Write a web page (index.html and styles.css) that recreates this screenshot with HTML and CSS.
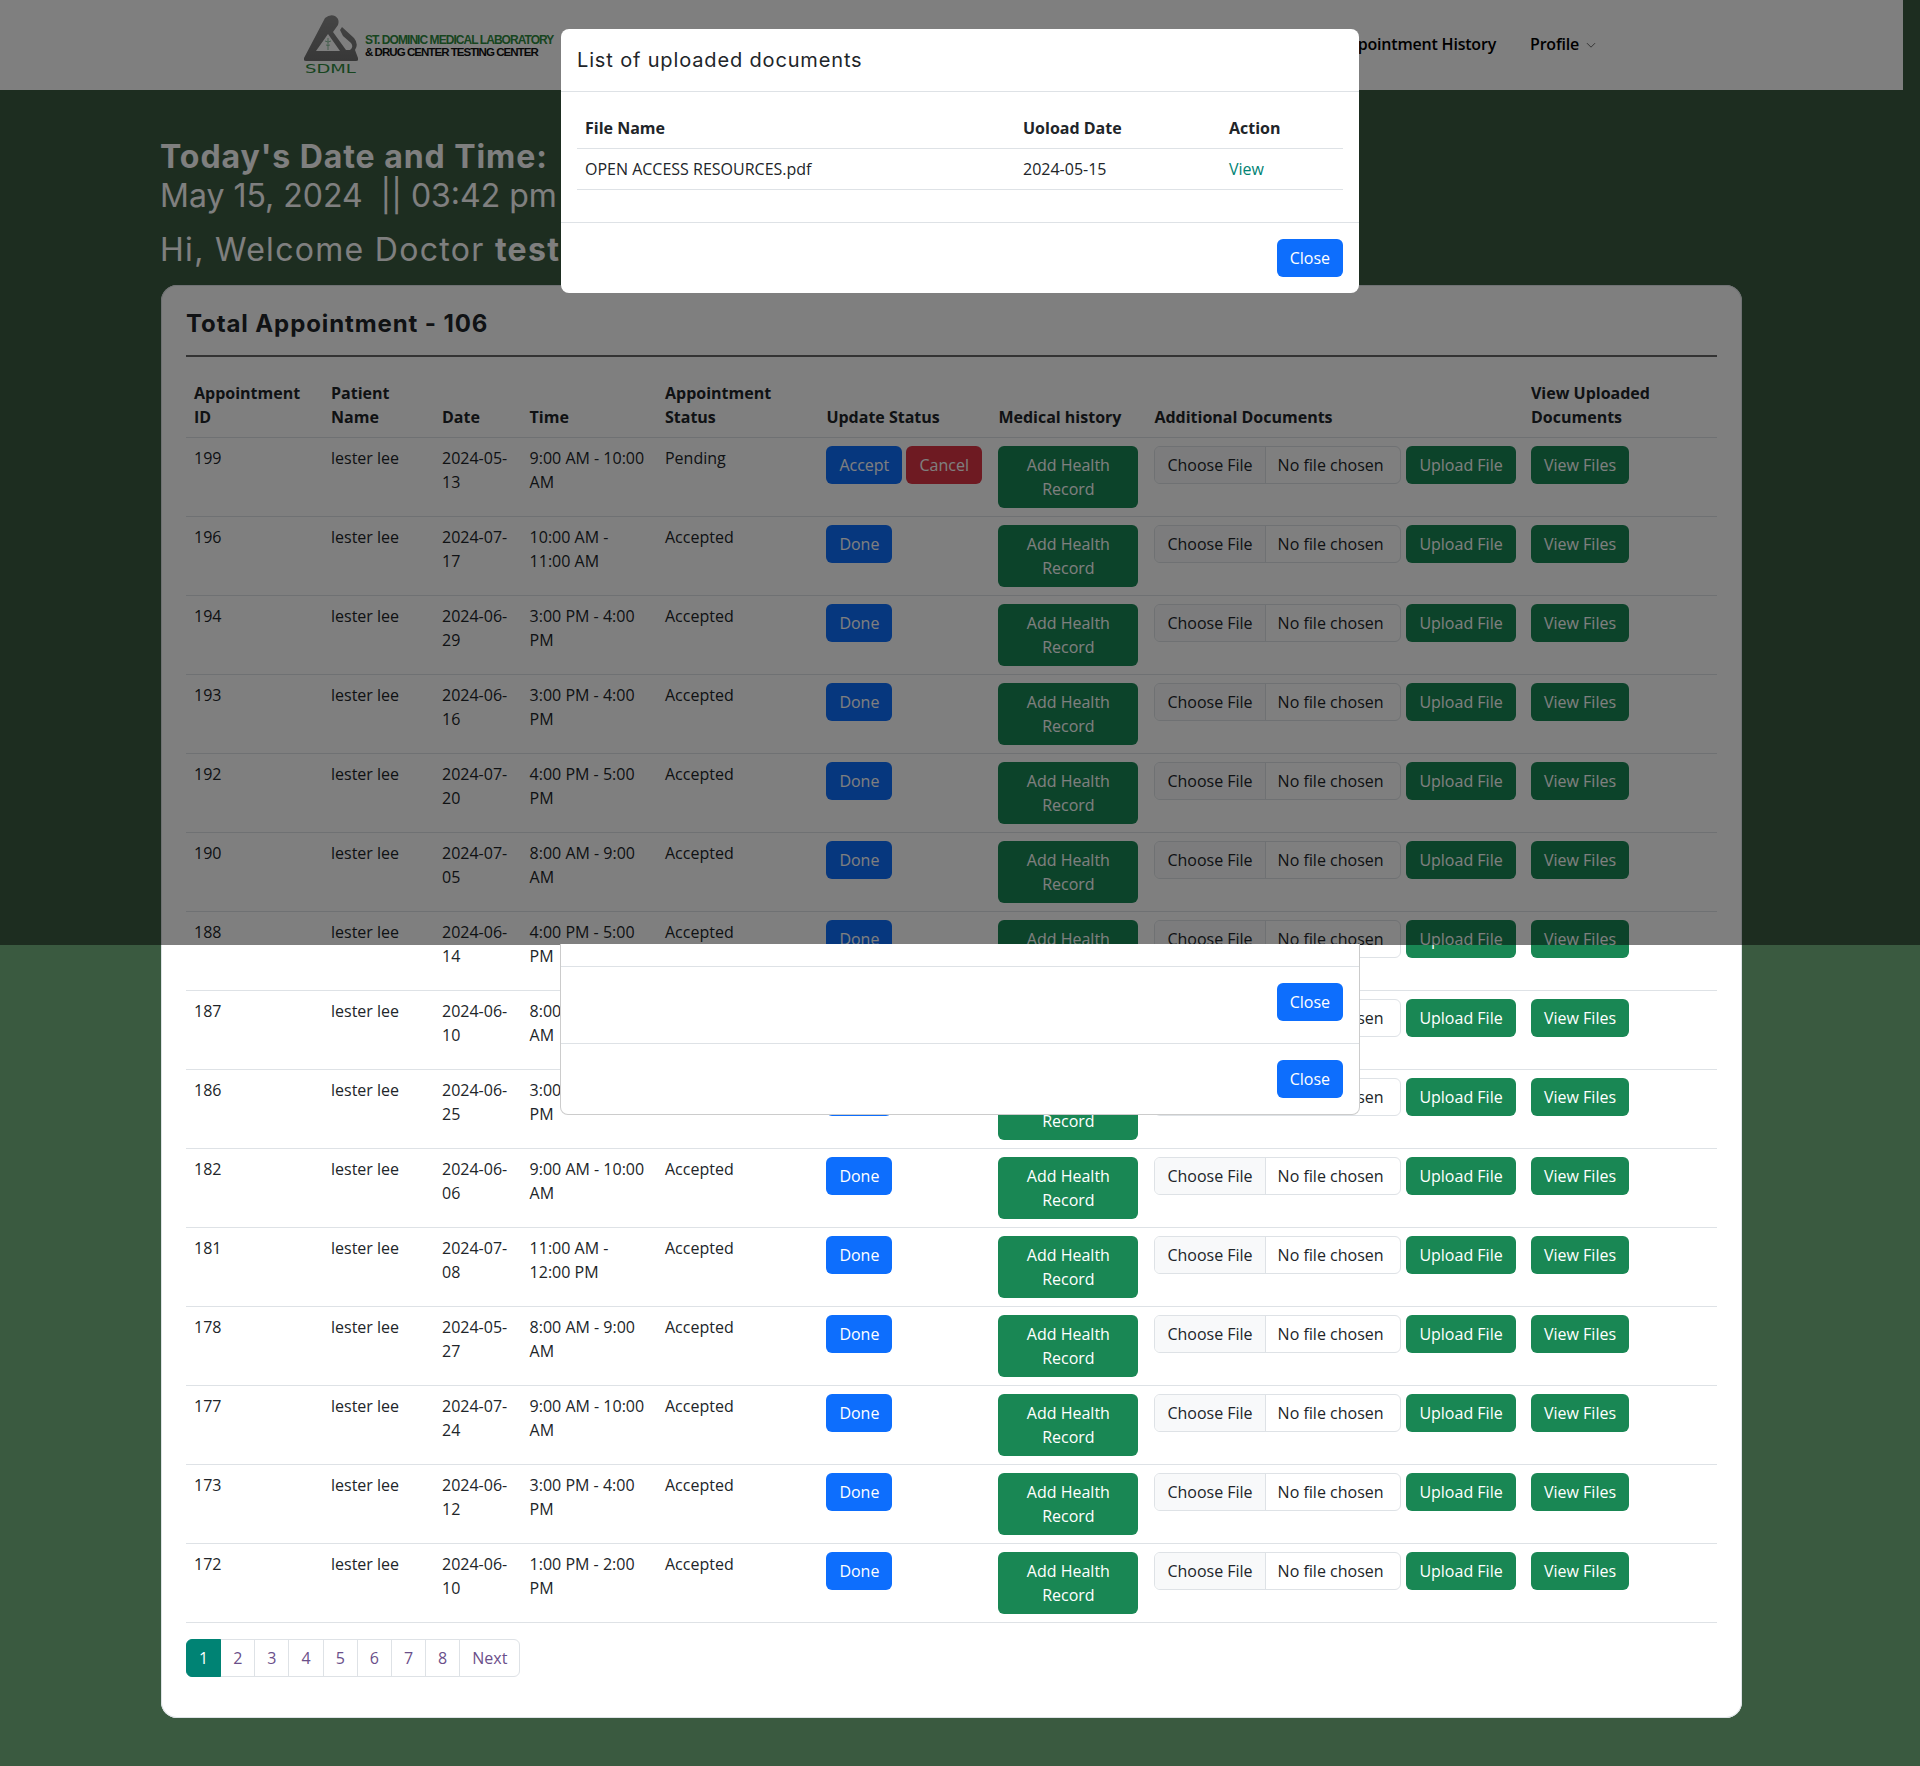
FILE: index.html
```html
<!DOCTYPE html>
<html lang="en">
<head>
    <meta charset="UTF-8">
    <title>Doctor Dashboard</title>
    <link rel="stylesheet" href="styles.css">
</head>
<body>
    <header class="navbar">
        <a class="brand" href="#">
            <span class="brand-mark">
                <svg class="brand-icon" width="54" height="47" viewBox="0 0 54 47">
                    <defs>
                        <linearGradient id="logoGray" x1="0" y1="0" x2="0" y2="1">
                            <stop offset="0" stop-color="#8a8a8a"/>
                            <stop offset="1" stop-color="#707070"/>
                        </linearGradient>
                    </defs>
                    <path fill="url(#logoGray)" fill-rule="evenodd" d="M21 3 Q26 -1 31 1 Q36 4 34 10 L29 17 L42 35 L46 35 Q50 32 47 28 L39 21 L36 15 L38 12 L50 23 Q55 29 51 35 L54 43 Q55 46 52 46 L2 46 Q-1 46 0 43 Z M24 19 L12 36 L36 36 Z"/>
                    <path d="M24 23 V35 M21 26 Q24 28 27 26 M22 30 Q24 31 26 30" stroke="#8fbf9f" stroke-width="1" fill="none"/>
                </svg>
                <span class="brand-abbr">SDML</span>
            </span>
            <span class="brand-text">
                <span class="brand-line-green">ST. DOMINIC MEDICAL LABORATORY</span>
                <span class="brand-line-black">&amp; DRUG CENTER TESTING CENTER</span>
            </span>
        </a>
        <nav class="nav-links">
            <a href="#">Appointment History</a>
            <a href="#">Profile
                <svg class="chevron" width="10" height="10" viewBox="0 0 16 16"><path d="M1.5 5l6.5 6.5L14.5 5" fill="none" stroke="#555" stroke-width="1.4"/></svg>
            </a>
        </nav>
    </header>

    <main class="page">
        <h2 class="today-title">Today's Date and Time:</h2>
        <p class="today-value">May 15, 2024 &nbsp;|| 03:42 pm</p>
        <p class="welcome">Hi, Welcome Doctor <b>test doctor</b></p>

        <section class="card">
            <h3 class="card-title">Total Appointment - 106</h3>
            <hr class="card-rule">

            <table class="appt-table">
                <colgroup>
                    <col class="col-id"><col class="col-name"><col class="col-date"><col class="col-time"><col class="col-status">
                    <col class="col-update"><col class="col-history"><col class="col-docs"><col class="col-view">
                </colgroup>
                <thead>
                    <tr>
                        <th>Appointment ID</th>
                        <th>Patient Name</th>
                        <th>Date</th>
                        <th>Time</th>
                        <th>Appointment Status</th>
                        <th>Update Status</th>
                        <th>Medical history</th>
                        <th>Additional Documents</th>
                        <th>View Uploaded Documents</th>
                    </tr>
                </thead>
                <tbody>
                    <tr>
                        <td>199</td><td>lester lee</td><td>2024-05-13</td><td>9:00 AM - 10:00 AM</td><td>Pending</td>
                        <td><a class="btn btn-primary" href="#">Accept</a> <a class="btn btn-danger" href="#">Cancel</a></td>
                        <td><a class="btn btn-success btn-block" href="#">Add Health Record</a></td>
                        <td><div class="upload"><div class="file-input"><span class="file-btn">Choose File</span><span class="file-name">No file chosen</span></div><a class="btn btn-success" href="#">Upload File</a></div></td>
                        <td><a class="btn btn-success" href="#">View Files</a></td>
                    </tr>
                    <tr>
                        <td>196</td><td>lester lee</td><td>2024-07-17</td><td>10:00 AM - 11:00 AM</td><td>Accepted</td>
                        <td><a class="btn btn-primary" href="#">Done</a></td>
                        <td><a class="btn btn-success btn-block" href="#">Add Health Record</a></td>
                        <td><div class="upload"><div class="file-input"><span class="file-btn">Choose File</span><span class="file-name">No file chosen</span></div><a class="btn btn-success" href="#">Upload File</a></div></td>
                        <td><a class="btn btn-success" href="#">View Files</a></td>
                    </tr>
                    <tr>
                        <td>194</td><td>lester lee</td><td>2024-06-29</td><td>3:00 PM - 4:00 PM</td><td>Accepted</td>
                        <td><a class="btn btn-primary" href="#">Done</a></td>
                        <td><a class="btn btn-success btn-block" href="#">Add Health Record</a></td>
                        <td><div class="upload"><div class="file-input"><span class="file-btn">Choose File</span><span class="file-name">No file chosen</span></div><a class="btn btn-success" href="#">Upload File</a></div></td>
                        <td><a class="btn btn-success" href="#">View Files</a></td>
                    </tr>
                    <tr>
                        <td>193</td><td>lester lee</td><td>2024-06-16</td><td>3:00 PM - 4:00 PM</td><td>Accepted</td>
                        <td><a class="btn btn-primary" href="#">Done</a></td>
                        <td><a class="btn btn-success btn-block" href="#">Add Health Record</a></td>
                        <td><div class="upload"><div class="file-input"><span class="file-btn">Choose File</span><span class="file-name">No file chosen</span></div><a class="btn btn-success" href="#">Upload File</a></div></td>
                        <td><a class="btn btn-success" href="#">View Files</a></td>
                    </tr>
                    <tr>
                        <td>192</td><td>lester lee</td><td>2024-07-20</td><td>4:00 PM - 5:00 PM</td><td>Accepted</td>
                        <td><a class="btn btn-primary" href="#">Done</a></td>
                        <td><a class="btn btn-success btn-block" href="#">Add Health Record</a></td>
                        <td><div class="upload"><div class="file-input"><span class="file-btn">Choose File</span><span class="file-name">No file chosen</span></div><a class="btn btn-success" href="#">Upload File</a></div></td>
                        <td><a class="btn btn-success" href="#">View Files</a></td>
                    </tr>
                    <tr>
                        <td>190</td><td>lester lee</td><td>2024-07-05</td><td>8:00 AM - 9:00 AM</td><td>Accepted</td>
                        <td><a class="btn btn-primary" href="#">Done</a></td>
                        <td><a class="btn btn-success btn-block" href="#">Add Health Record</a></td>
                        <td><div class="upload"><div class="file-input"><span class="file-btn">Choose File</span><span class="file-name">No file chosen</span></div><a class="btn btn-success" href="#">Upload File</a></div></td>
                        <td><a class="btn btn-success" href="#">View Files</a></td>
                    </tr>
                    <tr>
                        <td>188</td><td>lester lee</td><td>2024-06-14</td><td>4:00 PM - 5:00 PM</td><td>Accepted</td>
                        <td><a class="btn btn-primary" href="#">Done</a></td>
                        <td><a class="btn btn-success btn-block" href="#">Add Health Record</a></td>
                        <td><div class="upload"><div class="file-input"><span class="file-btn">Choose File</span><span class="file-name">No file chosen</span></div><a class="btn btn-success" href="#">Upload File</a></div></td>
                        <td><a class="btn btn-success" href="#">View Files</a></td>
                    </tr>
                    <tr>
                        <td>187</td><td>lester lee</td><td>2024-06-10</td><td>8:00 AM - 9:00 AM</td><td>Accepted</td>
                        <td><a class="btn btn-primary" href="#">Done</a></td>
                        <td><a class="btn btn-success btn-block" href="#">Add Health Record</a></td>
                        <td><div class="upload"><div class="file-input"><span class="file-btn">Choose File</span><span class="file-name">No file chosen</span></div><a class="btn btn-success" href="#">Upload File</a></div></td>
                        <td><a class="btn btn-success" href="#">View Files</a></td>
                    </tr>
                    <tr>
                        <td>186</td><td>lester lee</td><td>2024-06-25</td><td>3:00 PM - 4:00 PM</td><td>Accepted</td>
                        <td><a class="btn btn-primary" href="#">Done</a></td>
                        <td><a class="btn btn-success btn-block" href="#">Add Health Record</a></td>
                        <td><div class="upload"><div class="file-input"><span class="file-btn">Choose File</span><span class="file-name">No file chosen</span></div><a class="btn btn-success" href="#">Upload File</a></div></td>
                        <td><a class="btn btn-success" href="#">View Files</a></td>
                    </tr>
                    <tr>
                        <td>182</td><td>lester lee</td><td>2024-06-06</td><td>9:00 AM - 10:00 AM</td><td>Accepted</td>
                        <td><a class="btn btn-primary" href="#">Done</a></td>
                        <td><a class="btn btn-success btn-block" href="#">Add Health Record</a></td>
                        <td><div class="upload"><div class="file-input"><span class="file-btn">Choose File</span><span class="file-name">No file chosen</span></div><a class="btn btn-success" href="#">Upload File</a></div></td>
                        <td><a class="btn btn-success" href="#">View Files</a></td>
                    </tr>
                    <tr>
                        <td>181</td><td>lester lee</td><td>2024-07-08</td><td>11:00 AM - 12:00 PM</td><td>Accepted</td>
                        <td><a class="btn btn-primary" href="#">Done</a></td>
                        <td><a class="btn btn-success btn-block" href="#">Add Health Record</a></td>
                        <td><div class="upload"><div class="file-input"><span class="file-btn">Choose File</span><span class="file-name">No file chosen</span></div><a class="btn btn-success" href="#">Upload File</a></div></td>
                        <td><a class="btn btn-success" href="#">View Files</a></td>
                    </tr>
                    <tr>
                        <td>178</td><td>lester lee</td><td>2024-05-27</td><td>8:00 AM - 9:00 AM</td><td>Accepted</td>
                        <td><a class="btn btn-primary" href="#">Done</a></td>
                        <td><a class="btn btn-success btn-block" href="#">Add Health Record</a></td>
                        <td><div class="upload"><div class="file-input"><span class="file-btn">Choose File</span><span class="file-name">No file chosen</span></div><a class="btn btn-success" href="#">Upload File</a></div></td>
                        <td><a class="btn btn-success" href="#">View Files</a></td>
                    </tr>
                    <tr>
                        <td>177</td><td>lester lee</td><td>2024-07-24</td><td>9:00 AM - 10:00 AM</td><td>Accepted</td>
                        <td><a class="btn btn-primary" href="#">Done</a></td>
                        <td><a class="btn btn-success btn-block" href="#">Add Health Record</a></td>
                        <td><div class="upload"><div class="file-input"><span class="file-btn">Choose File</span><span class="file-name">No file chosen</span></div><a class="btn btn-success" href="#">Upload File</a></div></td>
                        <td><a class="btn btn-success" href="#">View Files</a></td>
                    </tr>
                    <tr>
                        <td>173</td><td>lester lee</td><td>2024-06-12</td><td>3:00 PM - 4:00 PM</td><td>Accepted</td>
                        <td><a class="btn btn-primary" href="#">Done</a></td>
                        <td><a class="btn btn-success btn-block" href="#">Add Health Record</a></td>
                        <td><div class="upload"><div class="file-input"><span class="file-btn">Choose File</span><span class="file-name">No file chosen</span></div><a class="btn btn-success" href="#">Upload File</a></div></td>
                        <td><a class="btn btn-success" href="#">View Files</a></td>
                    </tr>
                    <tr>
                        <td>172</td><td>lester lee</td><td>2024-06-10</td><td>1:00 PM - 2:00 PM</td><td>Accepted</td>
                        <td><a class="btn btn-primary" href="#">Done</a></td>
                        <td><a class="btn btn-success btn-block" href="#">Add Health Record</a></td>
                        <td><div class="upload"><div class="file-input"><span class="file-btn">Choose File</span><span class="file-name">No file chosen</span></div><a class="btn btn-success" href="#">Upload File</a></div></td>
                        <td><a class="btn btn-success" href="#">View Files</a></td>
                    </tr>
                </tbody>
            </table>

            <ul class="pagination">
                <li class="active"><a href="#">1</a></li>
                <li><a href="#">2</a></li>
                <li><a href="#">3</a></li>
                <li><a href="#">4</a></li>
                <li><a href="#">5</a></li>
                <li><a href="#">6</a></li>
                <li><a href="#">7</a></li>
                <li><a href="#">8</a></li>
                <li><a href="#">Next</a></li>
            </ul>
        </section>
    </main>

    <div class="backdrop"></div>

    <!-- open modal -->
    <div class="modal modal-docs">
        <div class="modal-header">
            <h5 class="modal-title">List of uploaded documents</h5>
        </div>
        <div class="modal-body">
            <table class="docs-table">
                <colgroup><col class="col-file"><col class="col-upload"><col class="col-action"></colgroup>
                <thead>
                    <tr><th>File Name</th><th>Uoload Date</th><th>Action</th></tr>
                </thead>
                <tbody>
                    <tr><td>OPEN ACCESS RESOURCES.pdf</td><td>2024-05-15</td><td><a class="view-link" href="#">View</a></td></tr>
                </tbody>
            </table>
        </div>
        <div class="modal-footer">
            <a class="btn btn-primary" href="#">Close</a>
        </div>
    </div>

    <!-- leftover modals under the fold -->
    <div class="modal modal-stack">
        <div class="stack-gap"></div>
        <div class="modal-footer stack-footer">
            <a class="btn btn-primary" href="#">Close</a>
        </div>
        <div class="modal-footer stack-footer">
            <a class="btn btn-primary" href="#">Close</a>
        </div>
    </div>
</body>
</html>
```

FILE: styles.css
```css
* {
    box-sizing: border-box;
}

body {
    background: #3a5a40;
    color: #212529;
    font-family: 'Open Sans', sans-serif;
    font-size: 16px;
    line-height: 24px;
    margin: 0;
    padding: 0 17px 0 0;
    position: relative;
}

a {
    text-decoration: none;
}

/* top bar */
.navbar {
    align-items: center;
    background: #fff;
    display: flex;
    height: 90px;
    justify-content: space-between;
    padding: 0 307px 2px 304px;
}

.brand {
    align-items: flex-start;
    display: flex;
    gap: 7px;
    margin-top: 3px;
}

.brand-mark {
    display: flex;
    flex-direction: column;
    width: 54px;
}

.brand-icon {
    display: block;
}

.brand-abbr {
    color: #2f8a3e;
    font-family: 'DejaVu Sans', sans-serif;
    font-size: 12px;
    line-height: 14px;
    margin-left: 1px;
    transform: scaleX(1.5);
    transform-origin: left;
}

.brand-text {
    display: flex;
    flex-direction: column;
    font-family: 'Liberation Sans', sans-serif;
    font-size: 12px;
    font-weight: 700;
    line-height: 11.5px;
    padding-top: 20px;
}

.brand-line-green {
    color: #2f8a3e;
    letter-spacing: -0.95px;
}

.brand-line-black {
    color: #111;
    font-size: 11.5px;
    letter-spacing: -0.95px;
}

.nav-links {
    align-items: center;
    display: flex;
    gap: 34px;
}

.nav-links a {
    color: #000;
    font-size: 16px;
    font-weight: 600;
    letter-spacing: -0.2px;
}

.chevron {
    margin-left: 3px;
}

/* page head */
.page {
    padding: 48px 161px;
}

.today-title,
.today-value,
.welcome,
.card-title {
    font-family: 'Inter', sans-serif;
}

.today-title,
.today-value,
.welcome {
    margin-left: -1px;
}

.today-title {
    color: #fff;
    font-size: 32px;
    font-weight: 700;
    letter-spacing: 0.95px;
    line-height: 38px;
    margin-bottom: 0;
    margin-top: 0;
}

.today-value {
    color: #fff;
    font-size: 32px;
    font-weight: 400;
    line-height: 39px;
    margin-bottom: 16px;
    margin-top: 0;
}

.welcome {
    color: #fff;
    font-size: 32px;
    letter-spacing: 1.3px;
    line-height: 38px;
    margin-bottom: 16px;
    margin-top: 0;
}

.card {
    background: #fff;
    border-radius: 16px;
    box-shadow: inset 0 0 0 1px #dee2e6;
    padding: 25px;
}

.card-title {
    font-size: 24px;
    font-weight: 700;
    letter-spacing: 0.9px;
    line-height: 28px;
    margin: 0 0 17px;
}

.card-rule {
    border: 0;
    border-top: 2px solid #666;
    margin: 0 0 15.5px;
}

/* appointments */
.appt-table {
    border-collapse: collapse;
    margin-bottom: 16px;
    table-layout: fixed;
    width: 100%;
}

.col-id { width: 137px; }
.col-name { width: 111px; }
.col-date { width: 87.6px; }
.col-time { width: 135.4px; }
.col-status { width: 161.4px; }
.col-update { width: 172px; }
.col-history { width: 156px; }
.col-docs { width: 376.6px; }

.appt-table th,
.appt-table td {
    border-bottom: 1px solid #dee2e6;
    padding: 8px;
    text-align: left;
}

.appt-table th {
    font-weight: 700;
    vertical-align: bottom;
}

.appt-table td {
    vertical-align: top;
}

.btn {
    border-radius: 6px;
    color: #fff;
    display: inline-block;
    flex-shrink: 0;
    line-height: 24px;
    padding: 7px 13px;
    text-align: center;
}

.btn-primary {
    background: #0d6efd;
}

.btn-danger {
    background: #dc3545;
}

.btn-success {
    background: #198754;
}

.btn-block {
    padding-left: 20px;
    padding-right: 20px;
}

.upload {
    align-items: flex-start;
    display: flex;
    gap: 5px;
    white-space: nowrap;
    width: 361px;
}

.file-input {
    background: #fff;
    border: 1px solid #dee2e6;
    border-radius: 6px;
    display: flex;
    flex-shrink: 0;
    height: 38px;
    overflow: hidden;
    width: 247px;
}

.file-btn {
    background: #f8f9fa;
    border-right: 1px solid #dee2e6;
    padding: 6px 12px;
    white-space: nowrap;
}

.file-name {
    padding: 6px 12px;
    white-space: nowrap;
}

.pagination {
    display: flex;
    list-style: none;
    margin: 0 0 16px;
    padding: 0;
}

.pagination li + li {
    margin-left: -1px;
}

.pagination a {
    background: #fff;
    border: 1px solid #dee2e6;
    color: #6b4f8a;
    display: block;
    padding: 6px 12px;
}

.pagination li:first-child a {
    border-radius: 6px 0 0 6px;
}

.pagination li:last-child a {
    border-radius: 0 6px 6px 0;
}

.pagination .active a {
    background: #008374;
    border-color: #008374;
    color: #fff;
    position: relative;
}

/* overlay */
.backdrop {
    background: rgba(0, 0, 0, 0.5);
    height: 945px;
    left: 0;
    position: absolute;
    top: 0;
    width: 1920px;
}

.modal {
    background: #fff;
    border: 1px solid rgba(0, 0, 0, 0.2);
    border-radius: 8px;
    left: 560px;
    position: absolute;
    width: 800px;
}

.modal-docs {
    border: 0;
    height: 264px;
    left: 561px;
    top: 29px;
    width: 798px;
}

.modal-header {
    border-bottom: 1px solid #dee2e6;
    height: 63px;
    padding: 16px;
}

.modal-title {
    font-family: 'Inter', sans-serif;
    font-size: 20px;
    font-weight: 400;
    letter-spacing: 0.85px;
    line-height: 30px;
    margin: 0;
}

.modal-body {
    padding: 16px;
}

.docs-table {
    border-collapse: collapse;
    margin-bottom: 16px;
    table-layout: fixed;
    width: 100%;
}

.col-file { width: 438px; }
.col-upload { width: 206px; }

.docs-table th,
.docs-table td {
    border-bottom: 1px solid #dee2e6;
    padding: 8px;
    text-align: left;
}

.docs-table th {
    font-weight: 700;
}

.view-link {
    color: #008374;
}

.modal-footer {
    border-top: 1px solid #dee2e6;
    display: flex;
    justify-content: flex-end;
    padding: 16px;
}

.modal-stack {
    border-radius: 0 0 8px 8px;
    border-top: 0;
    height: 171px;
    top: 944px;
}

.stack-gap {
    height: 22px;
}

.stack-footer:not(:last-child) {
    padding-bottom: 22px;
}
```
